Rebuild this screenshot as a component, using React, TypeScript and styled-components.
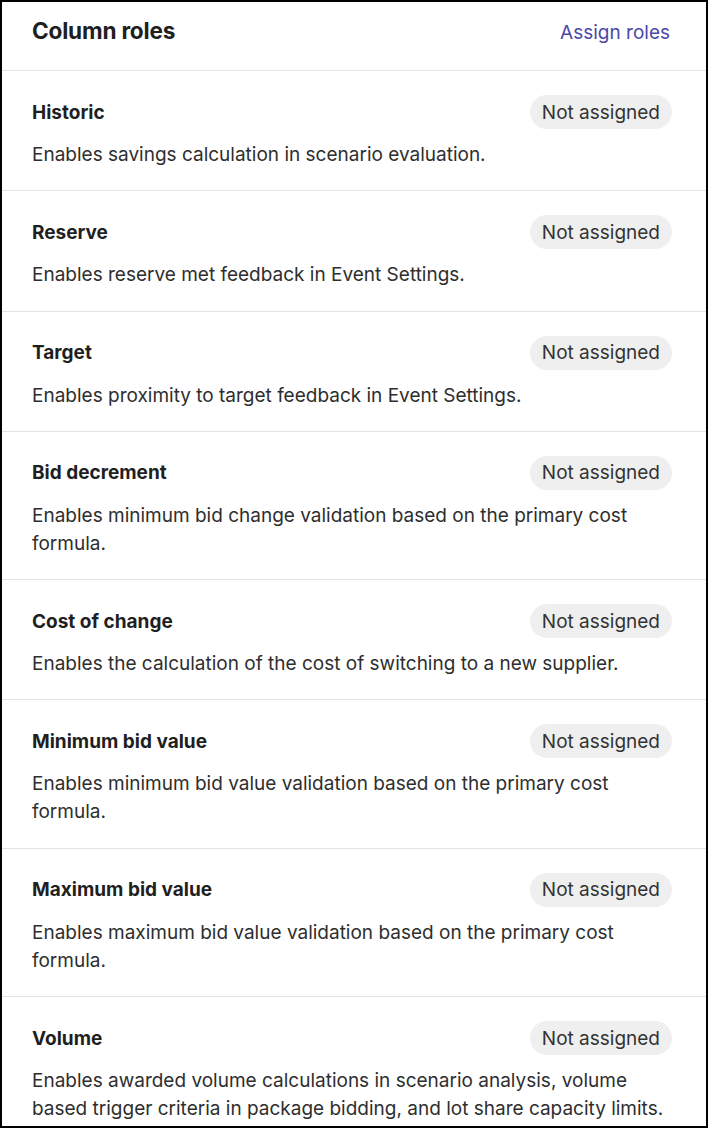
import React from 'react'
import styled, { createGlobalStyle } from 'styled-components'

const GlobalStyle = createGlobalStyle`
    *, *::before, *::after {
        box-sizing: border-box;
    }
    html, body {
        margin: 0;
        padding: 0;
        background: #ffffff;
    }
    body {
        font-family: Inter, "Noto Sans", "Liberation Sans", sans-serif;
        -webkit-font-smoothing: antialiased;
    }
`

const Panel = styled.section`
    width: 708px;
    height: 1128px;
    border: 2px solid #000000;
    background: #ffffff;
    overflow: hidden;
`

const Header = styled.header`
    display: flex;
    justify-content: space-between;
    align-items: center;
    height: 69px;
    padding: 0 36px 11px 30px;
    border-bottom: 1px solid #e4e4e4;
`

const Title = styled.h2`
    margin: 0;
    font-size: 22.6px;
    font-weight: 700;
    color: #1f1f1f;
    letter-spacing: -0.2px;
`

const AssignLink = styled.a`
    margin-top: 3px;
    font-size: 19px;
    color: #4a48a6;
    text-decoration: none;
    cursor: pointer;
`

const Row = styled.div`
    display: grid;
    gap: 12px;
    padding: 24px 34px 21.3px 30px;
    border-bottom: 1px solid #e4e4e4;
`

const RowHead = styled.div`
    display: flex;
    justify-content: space-between;
    align-items: center;
    height: 34px;
`

const RoleName = styled.h3`
    margin: 0;
    font-size: 19px;
    font-weight: 700;
    color: #1f1f1f;
`

const Pill = styled.span`
    display: inline-flex;
    align-items: center;
    height: 34px;
    padding: 0 12px;
    border-radius: 17px;
    background: #efefef;
    font-size: 19px;
    color: #333333;
`

const Description = styled.p`
    margin: 0;
    font-size: 19px;
    line-height: 28px;
    color: #2e2e2e;
`

const roles = [
    { name: 'Historic', description: 'Enables savings calculation in scenario evaluation.' },
    { name: 'Reserve', description: 'Enables reserve met feedback in Event Settings.' },
    { name: 'Target', description: 'Enables proximity to target feedback in Event Settings.' },
    { name: 'Bid decrement', description: 'Enables minimum bid change validation based on the primary cost formula.' },
    { name: 'Cost of change', description: 'Enables the calculation of the cost of switching to a new supplier.' },
    { name: 'Minimum bid value', description: 'Enables minimum bid value validation based on the primary cost formula.' },
    { name: 'Maximum bid value', description: 'Enables maximum bid value validation based on the primary cost formula.' },
    { name: 'Volume', description: 'Enables awarded volume calculations in scenario analysis, volume based trigger criteria in package bidding, and lot share capacity limits.' },
]

const App = () => {
    return (
        <>
            <GlobalStyle />
            <Panel>
                <Header>
                    <Title>Column roles</Title>
                    <AssignLink>Assign roles</AssignLink>
                </Header>
                {
                    roles.map((role) => (
                        <Row key={role.name}>
                            <RowHead>
                                <RoleName>{role.name}</RoleName>
                                <Pill>Not assigned</Pill>
                            </RowHead>
                            <Description>{role.description}</Description>
                        </Row>
                    ))
                }
            </Panel>
        </>
    )
}

export default App
